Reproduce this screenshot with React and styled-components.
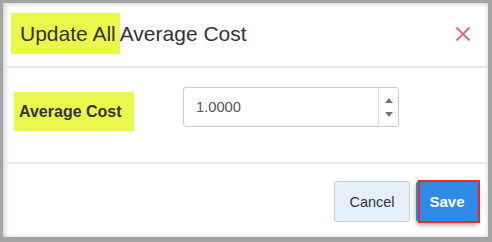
import React from "react";
import styled, { createGlobalStyle } from "styled-components";

const Global = createGlobalStyle`
  html, body { margin: 0; padding: 0; background: #ffffff; }
  body { font-family: "Liberation Sans", Arial, sans-serif; }
`;

const Frame = styled.div`
  box-sizing: border-box;
  width: 492px;
  height: 242px;
  border: 3px solid #a3a3a3;
  border-right-width: 4px;
  border-bottom-width: 5px;
  background: #fff;
  box-shadow: inset 4px 3px 5px -2px rgba(0, 0, 0, 0.18), inset -3px -3px 4px -2px rgba(0, 0, 0, 0.12);
  display: flex;
  flex-direction: column;
`;

const Header = styled.header`
  box-sizing: border-box;
  height: 65px;
  display: flex;
  align-items: flex-start;
  justify-content: space-between;
  padding: 10px 17px 0 8px;
  border-bottom: 2px solid #e8e8e8;
`;

const Title = styled.h1`
  margin: 0;
  font-size: 21px;
  font-weight: 400;
  color: #333;
  line-height: 41px;
  display: flex;
`;

const Highlight = styled.span`
  display: inline-block;
  background: #e9f84a;
  padding: ${(p) => p.$pad || "0"};
`;

const Close = styled.button`
  border: 0;
  background: none;
  padding: 0;
  margin-top: 14px;
  width: 16px;
  height: 14px;
  display: flex;
  cursor: pointer;
`;

const Body = styled.section`
  box-sizing: border-box;
  height: 96px;
  display: flex;
  align-items: flex-start;
  gap: 49px;
  padding: 19px 0 0 11px;
  border-bottom: 2px solid #ebebeb;
`;

const Label = styled.label`
  box-sizing: border-box;
  margin-top: 5px;
  width: 120px;
  height: 39px;
  display: flex;
  align-items: center;
  padding-left: 5px;
  background: #e9f84a;
  font-size: 16px;
  font-weight: 700;
  color: #333;
`;

const NumberBox = styled.div`
  box-sizing: border-box;
  width: 216px;
  height: 40px;
  border: 1px solid #cccccc;
  border-radius: 3px;
  display: flex;
  background: #fff;
`;

const Value = styled.input`
  flex: 1;
  min-width: 0;
  border: 0;
  outline: none;
  background: transparent;
  padding: 0 0 0 12px;
  font-family: "Liberation Sans", Arial, sans-serif;
  font-size: 14.7px;
  color: #555;
`;

const Spinner = styled.div`
  width: 20px;
  border-left: 1px solid #dddddd;
  display: flex;
  flex-direction: column;
  align-items: center;
  justify-content: space-around;
  padding: 5px 0;
  box-sizing: border-box;
`;

const Arrow = styled.span`
  width: 0;
  height: 0;
  border-left: 4px solid transparent;
  border-right: 4px solid transparent;
  ${(p) =>
    p.$up
      ? "border-bottom: 5px solid #777;"
      : "border-top: 5px solid #777;"}
`;

const Footer = styled.footer`
  flex: 1;
  display: flex;
  justify-content: flex-end;
  align-items: flex-start;
  gap: 6px;
  padding: 17px 10px 0 0;
`;

const Button = styled.button`
  position: relative;
  box-sizing: border-box;
  height: 41px;
  border-radius: 3px;
  font-family: "Liberation Sans", Arial, sans-serif;
  cursor: pointer;
  ${(p) =>
    p.$primary
      ? `
    width: 62px;
    background: #2f8ae6;
    border: 1px solid #2a7fd6;
    color: #fff;
    font-weight: 700;
    font-size: 15px;
    box-shadow: 0 3px 5px rgba(0,0,0,0.35);
    &::after {
      content: "";
      position: absolute;
      left: 1px; right: -3px; top: -2px; bottom: -2px;
      border: 2px solid #e8262d;
    }
  `
      : `
    width: 76px;
    background: #e6f0fb;
    border: 1px solid #c8cbd0;
    color: #333;
    font-size: 14.5px;
  `}
`;

export default function App() {
  return (
    <>
      <Global />
      <Frame>
        <Header>
          <Title>
            <Highlight $pad="0 4px 0 9px">Update All</Highlight>
            <span>Average Cost</span>
          </Title>
          <Close aria-label="Close">
            <svg width="16" height="14" viewBox="0 0 16 14">
              <path d="M1.5 0.5 L14.5 13.5 M14.5 0.5 L1.5 13.5" stroke="#e46464" strokeWidth="1.8" fill="none" />
            </svg>
          </Close>
        </Header>
        <Body>
          <Label>Average Cost</Label>
          <NumberBox>
            <Value defaultValue="1.0000" />
            <Spinner>
              <Arrow $up />
              <Arrow />
            </Spinner>
          </NumberBox>
        </Body>
        <Footer>
          <Button>Cancel</Button>
          <Button $primary>Save</Button>
        </Footer>
      </Frame>
    </>
  );
}
